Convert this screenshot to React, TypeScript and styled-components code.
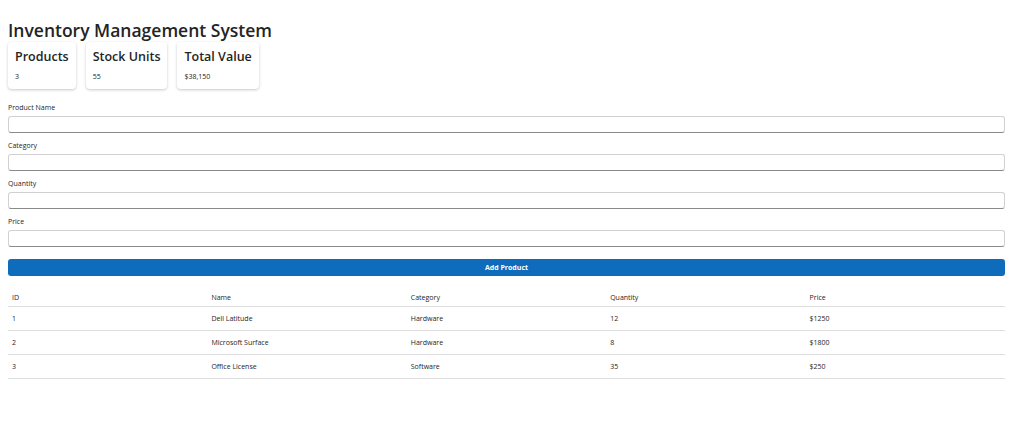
import React from 'react';
import styled, {createGlobalStyle} from 'styled-components';

const Global = createGlobalStyle`
  body {
    margin: 0;
    font-family: 'Open Sans', 'Noto Sans', sans-serif;
    color: #242424;
    background: #fff;
  }
`;

const Page = styled.div`
  padding: 18px 19px 8px 8px;
`;

const Title = styled.h1`
  font-size: 17.5px;
  font-weight: 600;
  margin: 0;
  line-height: 24px;
`;

const Stats = styled.div`
  display: flex;
  gap: 10px;
  margin-bottom: 12px;
`;

const StatCard = styled.div`
  padding: 7px 7px 8px 7px;
  height: 47px;
  box-sizing: border-box;
  border-radius: 4px;
  box-shadow: 0 1px 3px rgba(0, 0, 0, 0.22);
`;

const StatTitle = styled.div`
  font-size: 12.5px;
  font-weight: 600;
  line-height: 16px;
`;

const StatValue = styled.div`
  font-size: 7px;
  margin-top: 7px;
`;

const Field = styled.div`
  display: flex;
  flex-direction: column;
  gap: 1px;
  margin-bottom: 6px;
`;

const Label = styled.label`
  font-size: 7px;
  line-height: 14px;
`;

const Input = styled.input`
  height: 17px;
  box-sizing: border-box;
  border: 1px solid #d1d1d1;
  border-bottom-color: #8a8a8a;
  border-radius: 3px;
  padding: 0 6px;
  font-size: 8px;
  outline: none;
`;

const Button = styled.button`
  width: 100%;
  height: 17px;
  margin-top: 2px;
  background: #0f6cbd;
  color: #fff;
  border: none;
  border-radius: 3px;
  font-family: inherit;
  font-size: 7px;
  font-weight: 700;
`;

const Table = styled.table`
  width: 100%;
  border-collapse: collapse;
  margin-top: 13px;
  table-layout: fixed;
  font-size: 7px;
`;

const Th = styled.th`
  text-align: left;
  font-weight: 400;
  padding: 0 4px;
  height: 17px;
  border-bottom: 1px solid #e0e0e0;
`;

const Td = styled.td`
  padding: 0 4px;
  height: 23px;
  border-bottom: 1px solid #e0e0e0;
`;

const products = [
  {id: 1, name: 'Dell Latitude', category: 'Hardware', qty: 12, price: 1250},
  {id: 2, name: 'Microsoft Surface', category: 'Hardware', qty: 8, price: 1800},
  {id: 3, name: 'Office License', category: 'Software', qty: 35, price: 250},
];

export default function App() {
  return (
    <Page>
      <Global />
      <Title>Inventory Management System</Title>
      <Stats>
        <StatCard><StatTitle>Products</StatTitle><StatValue>3</StatValue></StatCard>
        <StatCard><StatTitle>Stock Units</StatTitle><StatValue>55</StatValue></StatCard>
        <StatCard><StatTitle>Total Value</StatTitle><StatValue>$38,150</StatValue></StatCard>
      </Stats>
      {['Product Name', 'Category', 'Quantity', 'Price'].map((l) => (
        <Field key={l}>
          <Label>{l}</Label>
          <Input />
        </Field>
      ))}
      <Button>Add Product</Button>
      <Table>
        <thead>
          <tr><Th>ID</Th><Th>Name</Th><Th>Category</Th><Th>Quantity</Th><Th>Price</Th></tr>
        </thead>
        <tbody>
          {products.map((p) => (
            <tr key={p.id}>
              <Td>{p.id}</Td><Td>{p.name}</Td><Td>{p.category}</Td><Td>{p.qty}</Td><Td>${p.price}</Td>
            </tr>
          ))}
        </tbody>
      </Table>
    </Page>
  );
}
